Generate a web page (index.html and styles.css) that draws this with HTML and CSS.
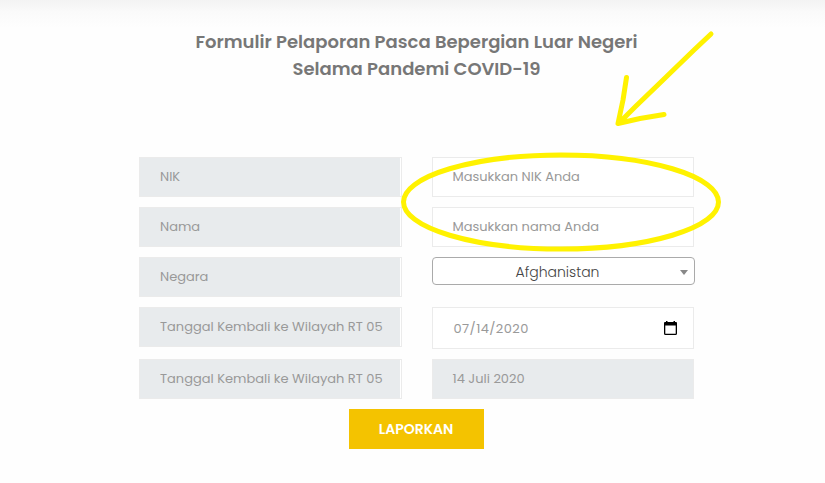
FILE: index.html
```html
<!DOCTYPE html>
<html lang="id">
<head>
<meta charset="utf-8">
<title>Formulir Pelaporan</title>
<link rel="stylesheet" href="styles.css">
</head>
<body>
<main class="page">
  <h1 class="title">Formulir Pelaporan Pasca Bepergian Luar Negeri<br>Selama Pandemi COVID-19</h1>
  <form class="form">
    <div class="row"><div class="label">NIK</div><div class="field">Masukkan NIK Anda</div></div>
    <div class="row"><div class="label">Nama</div><div class="field">Masukkan nama Anda</div></div>
    <div class="row"><div class="label">Negara</div><div class="select"><span class="country">Afghanistan</span><i class="caret"></i></div></div>
    <div class="row"><div class="label">Tanggal Kembali ke Wilayah RT 05</div><div class="field date"><span class="date-value">07/14/2020</span>
      <svg class="calendar" width="13" height="14" viewBox="0 0 13 14"><path fill="#000" fill-rule="evenodd" d="M2 0h1.500v1h6V0H11v1h1q1 0 1 1v10.500q0 1.500-1.500 1.500h-10Q0 14 0 12.500V2q0-1 1-1h1zM1.300 4.500v8.200h10.400V4.500z"/></svg></div></div>
    <div class="row"><div class="label">Tanggal Kembali ke Wilayah RT 05</div><div class="field readonly">14 Juli 2020</div></div>
    <button class="submit" type="button">LAPORKAN</button>
  </form>
  <svg class="marks" width="825" height="483" viewBox="0 0 825 483">
    <ellipse cx="561" cy="202" rx="157.500" ry="47"/>
    <path d="M711 34L694 50 663 80 635 107 619 123M626.500 77.500L623 100 618 123.500 640 118.500 664 114.500"/>
  </svg>
</main>
</body>
</html>
```
FILE: styles.css
```css
* { box-sizing: border-box; }
body {
  margin: 0;
  background: #fefefe;
  font-family: Poppins, "Open Sans", sans-serif;
  color: #999;
}
.page {
  position: relative;
  width: 825px;
  height: 483px;
  padding-top: 28px;
  overflow: hidden;
  background: linear-gradient(#f3f3f3, #fafafa 12px, #fefefe 28px);
}
.title {
  margin: 0 0 75px;
  padding-left: 8px;
  text-align: center;
  font-size: 18px;
  line-height: 27px;
  font-weight: 600;
  color: #777;
}
.form {
  display: flex;
  flex-direction: column;
  gap: 10px;
  width: 556px;
  margin-left: 139px;
}
.row {
  display: grid;
  grid-template-columns: 263px 263px;
  column-gap: 30px;
  align-items: start;
}
.label, .field {
  height: 40px;
  border: 1px solid #ebebeb;
  padding: 0 20px;
  font-size: 13px;
  line-height: 37px;
  white-space: nowrap;
}
.label {
  background: linear-gradient(90deg, #e8ebed 260px, #fff 260px);
}
.field {
  width: 262px;
  padding-left: 19.5px;
  background: #fff;
}
.date {
  display: flex;
  align-items: center;
  justify-content: space-between;
  height: 42px;
  padding-right: 16px;
  line-height: 39px;
}
.date-value {
  padding-left: 1px;
  letter-spacing: 0.4px;
}
.readonly { background: #e8ebed; }
.select {
  display: flex;
  align-items: center;
  height: 28px;
  padding: 2px 6px 0 2px;
  border: 1px solid #aaa;
  border-radius: 4px;
  background: #fff;
  font-size: 14px;
  font-weight: 300;
  color: #444;
}
.country { flex: 1; text-align: center; }
.caret {
  border: 4px solid transparent;
  border-top: 5px solid #888;
  border-bottom: 0;
}
.submit {
  align-self: center;
  width: 135px;
  height: 40px;
  margin-right: 2px;
  padding: 1px 0 0;
  border: 0;
  background: #f4c300;
  color: #fff;
  font: 600 14px/39px Poppins, "Open Sans", sans-serif;
}
.marks {
  position: absolute;
  inset: 0;
  fill: none;
  stroke: #fff200;
  stroke-width: 5;
  stroke-linecap: round;
  stroke-linejoin: round;
  pointer-events: none;
}
```
